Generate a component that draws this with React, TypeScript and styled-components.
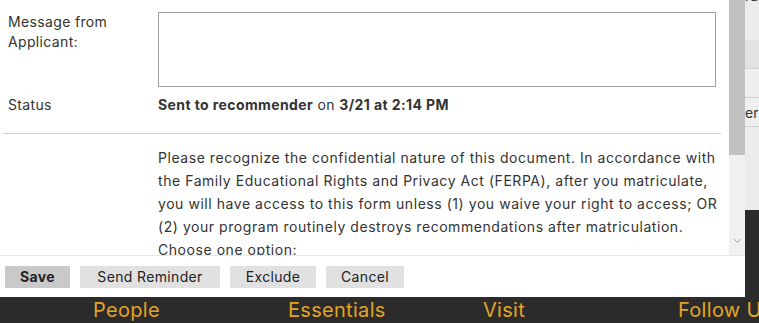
import React from "react";
import styled, { createGlobalStyle } from "styled-components";

const GlobalStyle = createGlobalStyle`
  html, body {
    margin: 0;
    padding: 0;
    background: #2b2b2b;
  }
  body {
    font-family: Inter, "Open Sans", Arial, sans-serif;
    color: #333;
  }
  * { box-sizing: border-box; }
`;

const Viewport = styled.div`
  position: relative;
  width: 759px;
  height: 323px;
  overflow: hidden;
`;

const Page = styled.div`
  display: flex;
  flex-direction: column;
  height: 100%;
`;

const PageBody = styled.div`
  height: 210px;
  background: #ececec;
  display: flex;
  flex-direction: column;
`;

const TableRow = styled.div<{ $h: number; $bg: string; $line?: boolean }>`
  display: grid;
  grid-template-columns: 745px 1fr;
  align-items: center;
  height: ${(p) => p.$h}px;
  background: ${(p) => p.$bg};
  border-bottom: ${(p) => (p.$line ? "1px solid #cfcfcf" : "none")};
  font-size: 14px;
  color: #333;
  white-space: nowrap;
  overflow: hidden;
`;

const TopCell = styled.span`
  align-self: start;
  margin-top: -13px;
`;

const Footer = styled.footer`
  flex: 1;
  background: #2b2b2b;
  padding-top: 87px;
`;

const FooterNav = styled.nav`
  display: grid;
  grid-template-columns: repeat(4, 195px);
  padding-left: 93px;
  white-space: nowrap;
`;

const FooterLink = styled.span`
  font-size: 20px;
  line-height: 26px;
  color: #e3a427;
  letter-spacing: 0.3px;
`;

const Modal = styled.div`
  position: absolute;
  top: 0;
  left: 0;
  width: 745px;
  height: 297px;
  background: #fff;
  display: flex;
  flex-direction: column;
`;

const ScrollArea = styled.div`
  flex: 1;
  display: flex;
  min-height: 0;
`;

const Content = styled.div`
  flex: 1;
  overflow: hidden;
  padding: 0 8px 0 3px;
  font-size: 14px;
  letter-spacing: 0.35px;
  color: #333;
`;

const Field = styled.div<{ $top?: number }>`
  display: grid;
  grid-template-columns: 150px 1fr;
  padding: 0 5px;
  margin-top: ${(p) => p.$top ?? 0}px;
`;

const Label = styled.div`
  line-height: 20px;
`;

const Value = styled.div`
  line-height: 20px;
  letter-spacing: 0.4px;
`;

const TextBox = styled.textarea`
  display: block;
  width: 100%;
  height: 75px;
  border: 1px solid #a0a0a0;
  resize: none;
  font: inherit;
  outline: none;
`;

const Divider = styled.hr`
  border: none;
  border-top: 1px solid #d0d0d0;
  margin: 18px 0 0;
`;

const Paragraph = styled.p`
  margin: 12px 0 0;
  line-height: 23px;
  letter-spacing: 0.55px;
  white-space: nowrap;
`;

const Scrollbar = styled.div`
  width: 16px;
  background: #f1f1f1;
  display: flex;
  flex-direction: column;
`;

const Thumb = styled.div`
  height: 155px;
  background: #c1c1c1;
`;

const ArrowButton = styled.div`
  margin-top: auto;
  height: 17px;
  display: flex;
  align-items: flex-start;
  justify-content: center;
  color: #a3a3a3;
`;

const ButtonBar = styled.div`
  height: 42px;
  border-top: 1px solid #e6e6e6;
  display: flex;
  align-items: center;
  gap: 10px;
  padding-left: 5px;
`;

const Button = styled.button<{ $primary?: boolean; $w: number }>`
  width: ${(p) => p.$w}px;
  height: 22px;
  border: none;
  padding: 0;
  background: ${(p) => (p.$primary ? "#c9c9c9" : "#e1e1e1")};
  font-family: inherit;
  font-size: 14px;
  letter-spacing: 0.35px;
  font-weight: ${(p) => (p.$primary ? 700 : 400)};
  color: #222;
`;

export default function App() {
  return (
    <>
      <GlobalStyle />
      <Viewport>
        <Page>
          <PageBody>
            <TableRow $h={40} $bg="#ececec">
              <span />
              <TopCell>rator</TopCell>
            </TableRow>
            <TableRow $h={29} $bg="#e2e2e2" $line>
              <span />
              <span />
            </TableRow>
            <TableRow $h={29} $bg="#efefef" $line>
              <span />
              <span />
            </TableRow>
            <TableRow $h={29} $bg="#efefef" $line>
              <span />
              <span>er</span>
            </TableRow>
          </PageBody>
          <Footer>
            <FooterNav>
              <FooterLink>People</FooterLink>
              <FooterLink>Essentials</FooterLink>
              <FooterLink>Visit</FooterLink>
              <FooterLink>Follow Us</FooterLink>
            </FooterNav>
          </Footer>
        </Page>

        <Modal>
          <ScrollArea>
            <Content>
              <Field $top={12}>
                <Label>
                  Message from
                  <br />
                  Applicant:
                </Label>
                <TextBox />
              </Field>
              <Field $top={8}>
                <Label>Status</Label>
                <Value>
                  <b>Sent to recommender</b> on <b>3/21 at 2:14 PM</b>
                </Value>
              </Field>
              <Divider />
              <Field>
                <span />
                <Paragraph>
                  Please recognize the confidential nature of this document. In accordance with
                  <br />
                  the Family Educational Rights and Privacy Act (FERPA), after you matriculate,
                  <br />
                  you will have access to this form unless (1) you waive your right to access; OR
                  <br />
                  (2) your program routinely destroys recommendations after matriculation.
                  <br />
                  Choose one option:
                </Paragraph>
              </Field>
            </Content>
            <Scrollbar>
              <Thumb />
              <ArrowButton>
                <svg width="9" height="6" viewBox="0 0 9 6">
                  <path d="M1 1 L4.5 4.5 L8 1" fill="none" stroke="currentColor" strokeWidth="1" />
                </svg>
              </ArrowButton>
            </Scrollbar>
          </ScrollArea>
          <ButtonBar>
            <Button $primary $w={65}>Save</Button>
            <Button $w={140}>Send Reminder</Button>
            <Button $w={86}>Exclude</Button>
            <Button $w={78}>Cancel</Button>
          </ButtonBar>
        </Modal>
      </Viewport>
    </>
  );
}
